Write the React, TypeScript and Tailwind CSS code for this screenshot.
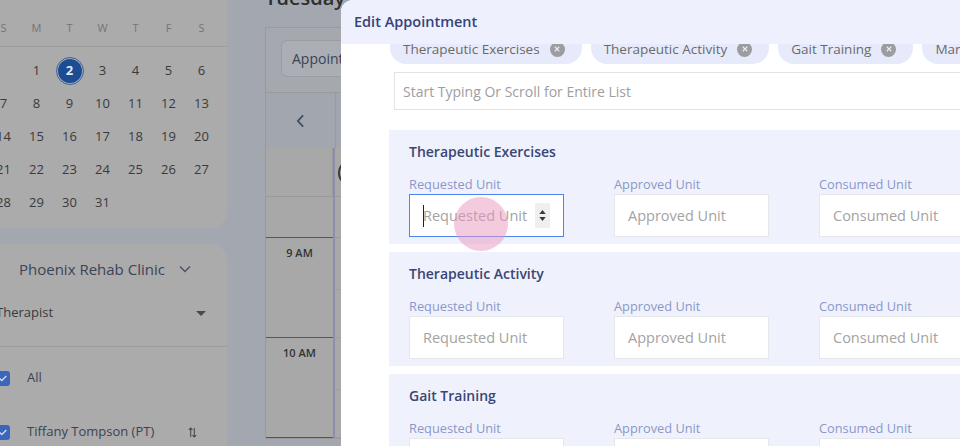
import React from 'react'

const font = { fontFamily: '"Open Sans", "Liberation Sans", sans-serif' }

const weekDays = ['S', 'M', 'T', 'W', 'T', 'F', 'S']
const dates: (number | null)[] = [
  null, 1, 2, 3, 4, 5, 6,
  7, 8, 9, 10, 11, 12, 13,
  14, 15, 16, 17, 18, 19, 20,
  21, 22, 23, 24, 25, 26, 27,
  28, 29, 30, 31, null, null, null,
]

const chips = ['Therapeutic Exercises', 'Therapeutic Activity', 'Gait Training', 'Manual Therapy']
const sections = ['Therapeutic Exercises', 'Therapeutic Activity', 'Gait Training']
const fields = ['Requested Unit', 'Approved Unit', 'Consumed Unit']

function Checkbox() {
  return (
    <div className="-ml-[5px] flex h-[15px] w-[15px] items-center justify-center rounded-[3px] bg-[#3a66bd]">
      <svg viewBox="0 0 12 12" className="h-[10px] w-[10px]">
        <path d="M2 6.5l2.6 2.5L10 3.5" fill="none" stroke="#d8dce6" strokeWidth="1.6" />
      </svg>
    </div>
  )
}

function Sidebar() {
  return (
    <aside className="flex w-[227px] shrink-0 flex-col gap-4">
      <section className="h-[228px] overflow-hidden rounded-br-2xl bg-[#ababab]">
        <div className="-ml-[13px] grid grid-cols-[repeat(7,33px)] pt-[18px]">
          {weekDays.map((d, i) => (
            <div key={i} className="flex h-5 items-center justify-center text-[11px] text-[#757575]">
              {d}
            </div>
          ))}
        </div>
        <div className="mt-2 border-t border-[#9d9d9d]" />
        <div className="-ml-[13px] mt-[7px] grid grid-cols-[repeat(7,33px)]">
          {dates.map((d, i) => (
            <div key={i} className="flex h-[33px] items-center justify-center text-[13px] text-[#3a3a3a]">
              {d === 2 ? (
                <span className="flex h-[24px] w-[24px] items-center justify-center rounded-full bg-[#1c4c93] font-bold text-[#e6e9ef] outline outline-1 outline-offset-[1.5px] outline-[#3b63a0]">
                  2
                </span>
              ) : (
                d
              )}
            </div>
          ))}
        </div>
      </section>

      <section className="flex-1 overflow-hidden rounded-tr-2xl bg-[#ababab]">
        <div className="mt-[14px] flex h-[22px] items-center gap-[14px] pl-[19px] text-[15px] font-medium text-[#3c4457]">
          Phoenix Rehab Clinic
          <svg viewBox="0 0 12 8" className="h-[8px] w-[12px]">
            <path d="M1 1.5l5 5 5-5" fill="none" stroke="#4b5366" strokeWidth="1.4" />
          </svg>
        </div>
        <div className="-ml-[4px] mt-[22px] flex h-[22px] items-center justify-between pr-[21px] text-[13px] text-[#3a3a3a]">
          Therapist
          <svg viewBox="0 0 10 5" className="h-[5px] w-[10px]">
            <path d="M0 0h10L5 5z" fill="#4a4a4a" />
          </svg>
        </div>
        <div className="mt-[22px] border-t border-[#9d9d9d]" />
        <div className="mt-[21px] flex h-[20px] items-center gap-[17px] text-[13px] font-medium text-[#3b4252]">
          <Checkbox />
          All
        </div>
        <div className="mt-[34px] flex h-[20px] items-center text-[13px] font-medium text-[#3b4252]">
          <div className="flex items-center gap-[17px]">
            <Checkbox />
            Tiffany Tompson (PT)
          </div>
          <svg viewBox="0 0 10 12" className="ml-[34px] h-[11px] w-[9px]">
            <path d="M3 11V1M1 3l2-2 2 2M7 1v10M5 9l2 2 2-2" fill="none" stroke="#454a55" strokeWidth="1.2" />
          </svg>
        </div>
      </section>
    </aside>
  )
}

function Main() {
  return (
    <main className="flex-1 overflow-hidden pl-5">
      <div className="-mt-[14px] h-[24px] text-[20px] font-semibold leading-[24px] text-[#2e2e2e]">Tuesday, January 2</div>
      <div className="mt-[17px] border border-[#9a9a9a]">
        <div className="flex h-[64px] items-start bg-[#a5a8af] pl-[15px] pt-[12px]">
          <div className="flex h-[37px] items-center rounded-md border border-[#9a9ca1] bg-[#abaeb4] px-[10px] text-[14px] text-[#3a4255]">
            Appointments
          </div>
        </div>
        <div className="flex h-[56px] border-t border-[#9a9a9a] bg-[#a2a6ae]">
          <div className="flex w-[70px] items-center justify-center border-r border-[#9a9a9a]">
            <svg viewBox="0 0 10 16" className="h-[14px] w-[9px]">
              <path d="M8 1.5L2 8l6 6.5" fill="none" stroke="#3f4a66" strokeWidth="2" />
            </svg>
          </div>
        </div>
        <div className="flex bg-[#a8a8a8]">
          <div className="w-[67px]">
            <div className="h-[49px] border-b border-r border-[#999]" />
            <div className="h-[41px] border-b border-[#4c5577]" />
            {['9 AM', '10 AM'].map((t) => (
              <div key={t} className="h-[100px] border-b border-[#4c5577] pt-[7px] text-center text-[11px] font-semibold text-[#333]">
                {t}
              </div>
            ))}
          </div>
          <div className="w-[2px] bg-[#8b8fa9]" />
          <div className="relative w-[20px]">
            <div className="h-[49px] border-b border-[#9b9b9b]" />
            <div className="h-[41px] border-b border-[#9b9b9b]" />
            {[0, 1].map((i) => (
              <div key={i}>
                <div className="h-[52px] border-b border-[#9e9e9e]" />
                <div className="h-[48px] border-b border-[#9e9e9e]" />
              </div>
            ))}
            <div className="absolute left-[3px] top-[12px] h-[26px] w-[26px] rounded-full border-2 border-[#3a3a3a]" />
          </div>
        </div>
      </div>
    </main>
  )
}

function Field({ label, focused }: { label: string; focused?: boolean }) {
  return (
    <div className="w-[155px] shrink-0">
      <div className="h-4 text-[12.8px] leading-4 text-[#8b97c9]">{label}</div>
      <div
        className={
          focused
            ? 'relative mt-[2px] flex h-[43px] items-center border border-[#4f84ee] bg-white pl-[13px] text-[14.5px] text-[#a3a3a3]'
            : 'relative mt-[2px] flex h-[43px] items-center border border-[#e6e7ea] bg-white pl-[13px] text-[14.5px] text-[#a3a3a3]'
        }
      >
        {label}
        {focused ? (
          <>
            <span className="absolute left-[13px] top-[10px] h-[22px] w-px bg-[#222]" />
            <span className="absolute left-[125px] top-[8px] flex h-[25px] w-[15px] flex-col items-center justify-center gap-[3px] bg-[#efefef]">
              <svg viewBox="0 0 8 5" className="h-[4px] w-[7px]">
                <path d="M0 5L4 0l4 5z" fill="#3a3a3a" />
              </svg>
              <svg viewBox="0 0 8 5" className="h-[4px] w-[7px]">
                <path d="M0 0l4 5 4-5z" fill="#3a3a3a" />
              </svg>
            </span>
          </>
        ) : null}
      </div>
    </div>
  )
}

function Modal() {
  return (
    <div className="absolute bottom-0 left-[341px] right-0 top-0 overflow-hidden rounded-tl-[12px] bg-white">
      <header className="relative z-10 flex h-[44px] items-center bg-[#eef1fd] pl-[13px] text-[14.5px] font-semibold text-[#36427a]">
        Edit Appointment
      </header>
      <div className="relative pl-[48px]">
        <div className="-mt-[16px] ml-px flex gap-[9px]">
          {chips.map((c) => (
            <div key={c} className="flex h-[36px] shrink-0 items-center gap-[10px] rounded-2xl bg-[#e7eafb] pl-[13px] pr-[17px] pt-[6px] text-[13.5px] text-[#6a6a6a]">
              {c}
              <span className="flex h-[15px] w-[15px] items-center justify-center rounded-full bg-[#9d9d9f]">
                <svg viewBox="0 0 8 8" className="h-[6px] w-[6px]">
                  <path d="M1 1l6 6M7 1L1 7" stroke="#e7eafb" strokeWidth="1.5" />
                </svg>
              </span>
            </div>
          ))}
        </div>
        <div className="ml-[5px] mt-[8px] flex h-[38px] w-[700px] items-center border border-[#e3e3e3] pl-[8px] text-[14px] text-[#9e9e9e]">
          Start Typing Or Scroll for Entire List
        </div>
        <div className="mt-[20px] flex flex-col gap-[8px]">
          {sections.map((s, si) => (
            <section key={s} className="h-[114px] w-[700px] bg-[#eff2fd] pl-[20px] pt-[12px]">
              <h3 className="h-5 text-[14px] font-semibold leading-5 text-[#3a4673]">{s}</h3>
              <div className="mt-[14px] flex gap-[50px]">
                {fields.map((f, fi) => (
                  <Field key={f} label={f} focused={si === 0 && fi === 0} />
                ))}
              </div>
            </section>
          ))}
        </div>
        <div className="absolute left-[113px] top-[169px] h-[54px] w-[54px] rounded-full bg-[rgba(233,150,190,0.5)]" />
      </div>
    </div>
  )
}

export default function App() {
  return (
    <div className="relative h-[446px] w-[960px] overflow-hidden bg-[#a2a7b0]" style={font}>
      <div className="flex h-full gap-[18px]">
        <Sidebar />
        <Main />
      </div>
      <Modal />
    </div>
  )
}
